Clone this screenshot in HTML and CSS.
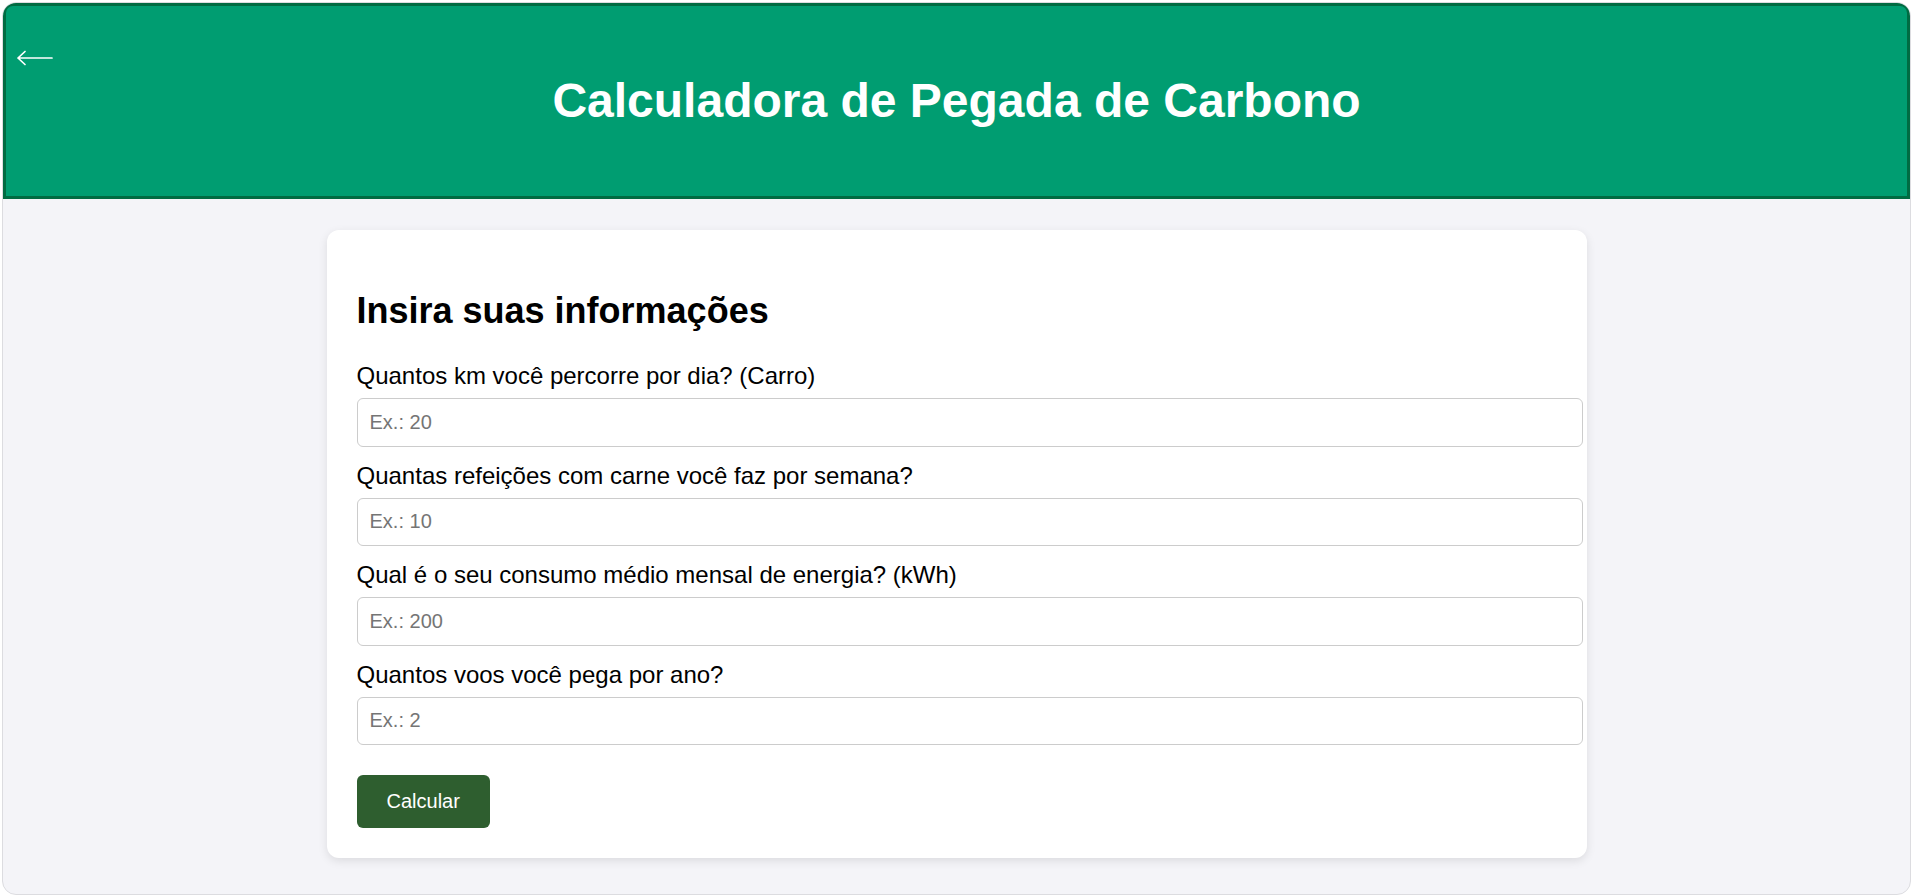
FILE: index.html
```html
<!DOCTYPE html>
<html lang="pt-BR">
<head>
<meta charset="utf-8">
<title>Calculadora de Pegada de Carbono</title>
<link rel="stylesheet" href="styles.css">
</head>
<body>
<div class="frame">
  <header class="topbar">
    <a class="back" href="#" aria-label="Voltar">
      <svg width="38" height="18" viewBox="0 0 38 18" aria-hidden="true">
        <path d="M2 9 H36 M2 9 L9 2.5 M2 9 L9 15.5" fill="none" stroke="#ffffff" stroke-width="1.7" stroke-linecap="round" stroke-linejoin="round"/>
      </svg>
    </a>
    <h1 class="title">Calculadora de Pegada de Carbono</h1>
  </header>
  <main class="content">
    <section class="card">
      <h2 class="card-title">Insira suas informações</h2>
      <form class="form">
        <label class="field-label" for="km">Quantos km você percorre por dia? (Carro)</label>
        <input class="field-input" id="km" type="number" placeholder="Ex.: 20">
        <label class="field-label" for="meat">Quantas refeições com carne você faz por semana?</label>
        <input class="field-input" id="meat" type="number" placeholder="Ex.: 10">
        <label class="field-label" for="energy">Qual é o seu consumo médio mensal de energia? (kWh)</label>
        <input class="field-input" id="energy" type="number" placeholder="Ex.: 200">
        <label class="field-label" for="flights">Quantos voos você pega por ano?</label>
        <input class="field-input" id="flights" type="number" placeholder="Ex.: 2">
        <button class="submit" type="button">Calcular</button>
      </form>
    </section>
  </main>
</div>
</body>
</html>
```

FILE: styles.css
```css
html, body {
  margin: 0;
  padding: 0;
  background: #ffffff;
}

body {
  font-family: "Liberation Sans", Arial, sans-serif;
  color: #000000;
}

.frame {
  margin: 2px 4px 0 2px;
  height: calc(100vh - 3px);
  box-sizing: border-box;
  border: 1px solid #dcdce0;
  border-radius: 14px;
  overflow: hidden;
  background: #f4f4f8;
}

.topbar {
  position: relative;
  background: #009d71;
  border: 3px solid #006b42;
  border-radius: 10px 10px 0 0;
  padding: 35px 20px 36px;
  text-align: center;
  color: #ffffff;
}

.back {
  position: absolute;
  left: 10px;
  top: 43px;
  display: block;
  width: 38px;
  height: 18px;
  line-height: 0;
}

.title {
  margin: 32px 0;
  font-size: 48px;
  font-weight: bold;
  line-height: 55px;
}

.content {
  padding-top: 31px;
}

.card {
  max-width: 1200px;
  margin: 0 auto;
  padding: 30px;
  background: #ffffff;
  border-radius: 12px;
  box-shadow: 0 3px 10px rgba(0, 0, 0, 0.1);
}

.card-title {
  margin: 30px 0 31px;
  font-size: 36px;
  font-weight: bold;
  line-height: 41px;
}

.form {
  display: flex;
  flex-direction: column;
  align-items: flex-start;
}

.field-label {
  display: block;
  font-size: 24px;
  line-height: 27px;
  margin-bottom: 9px;
}

.field-input {
  display: block;
  width: 100%;
  box-sizing: content-box;
  height: 22.5px;
  padding: 12px;
  margin: 0 0 15px;
  border: 1px solid #cccccc;
  border-radius: 6px;
  font-family: "Liberation Sans", Arial, sans-serif;
  font-size: 20px;
  line-height: 22.5px;
  color: #000000;
  background: #ffffff;
  outline: none;
}

.field-input::placeholder {
  color: #757575;
}

.submit {
  margin-top: 15px;
  padding: 15px 30px;
  border: none;
  border-radius: 6px;
  background: #2e5e2f;
  color: #ffffff;
  font-family: "Liberation Sans", Arial, sans-serif;
  font-size: 20px;
  line-height: 23px;
  cursor: pointer;
}
```
